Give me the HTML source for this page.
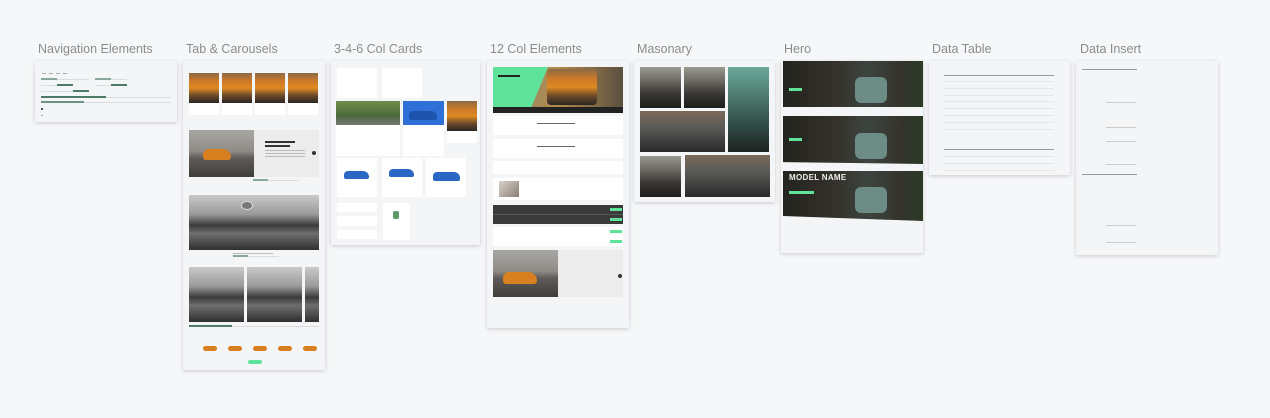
<!DOCTYPE html>
<html><head><meta charset="utf-8"><style>
*{margin:0;padding:0;box-sizing:border-box}
body{width:1270px;height:418px;background:#f6f7f8;position:relative;overflow:hidden;font-family:"Liberation Sans",sans-serif}
.t{position:absolute;top:42px;font-size:12.5px;color:#8c8c8c;white-space:nowrap}
.f{position:absolute;background:#f4f5f7;box-shadow:0 1px 4px rgba(0,0,0,.18)}
.a{position:absolute}
.w{position:absolute;background:#fff}
.orange{background:linear-gradient(180deg,#8a6a44 0,#c8782a 25%,#e08a22 50%,#6a4a2a 75%,#2b2622 100%)}
.grille{background:linear-gradient(180deg,#c9c9c9 0,#9a9a9a 35%,#3b3b3b 55%,#6e6e6e 70%,#2f2f2f 100%)}
.sea{background:linear-gradient(180deg,#a8a6a2 0,#8f8c88 45%,#5e5b58 60%,#3f3d3b 100%)}
.dark{background:linear-gradient(180deg,#9a9a90 0,#6a6660 35%,#3a3835 65%,#1d1d1c 100%)}
.hero{background:linear-gradient(90deg,#23231f 0,#35332c 40%,#3d4440 60%,#34332c 85%,#2a3a25 100%)}
.g{background:#5fe39a}
.l{position:absolute;height:1px;background:#d9dcdf}
.ln{position:absolute;height:1px;background:#e4e6e8}
.tx{position:absolute;height:1px;background:#555}
</style></head><body>

<div class="t" style="left:38px">Navigation Elements</div>
<div class="t" style="left:186px">Tab &amp; Carousels</div>
<div class="t" style="left:334px">3-4-6 Col Cards</div>
<div class="t" style="left:490px">12 Col Elements</div>
<div class="t" style="left:637px">Masonary</div>
<div class="t" style="left:784px">Hero</div>
<div class="t" style="left:932px">Data Table</div>
<div class="t" style="left:1080px">Data Insert</div>

<!-- Nav -->
<div class="f" style="left:35px;top:61px;width:142px;height:61px">
  <div class="tx" style="left:7px;top:12px;width:4px;background:#aaa"></div><div class="tx" style="left:14px;top:12px;width:4px;background:#aaa"></div><div class="tx" style="left:21px;top:12px;width:4px;background:#aaa"></div><div class="tx" style="left:28px;top:12px;width:4px;background:#aaa"></div>
  <div class="l" style="left:6px;top:18px;width:48px"></div><div class="a" style="left:6px;top:17px;width:16px;height:2px;background:#8aa89a"></div>
  <div class="l" style="left:60px;top:18px;width:32px"></div><div class="a" style="left:60px;top:17px;width:16px;height:2px;background:#8aa89a"></div>
  <div class="l" style="left:6px;top:24px;width:32px"></div><div class="a" style="left:22px;top:23px;width:16px;height:2px;background:#4f7a66"></div>
  <div class="l" style="left:60px;top:24px;width:32px"></div><div class="a" style="left:76px;top:23px;width:16px;height:2px;background:#4f7a66"></div>
  <div class="l" style="left:6px;top:30px;width:48px"></div><div class="a" style="left:38px;top:29px;width:16px;height:2px;background:#4f7a66"></div>
  <div class="l" style="left:6px;top:36px;width:130px"></div><div class="a" style="left:6px;top:35px;width:65px;height:2px;background:#4f7a66"></div>
  <div class="l" style="left:6px;top:41px;width:130px"></div><div class="a" style="left:6px;top:40px;width:43px;height:2px;background:#6f9384"></div>
  <div class="a" style="left:6px;top:47px;width:2px;height:2px;background:#555"></div>
  <div class="a" style="left:6px;top:54px;width:2px;height:1px;background:#999"></div>
</div>

<!-- Tab & Carousels -->
<div class="f" style="left:183px;top:61px;width:142px;height:309px">
  <div class="a orange" style="left:6px;top:12px;width:30px;height:30px"></div>
  <div class="a orange" style="left:39px;top:12px;width:30px;height:30px"></div>
  <div class="a orange" style="left:72px;top:12px;width:30px;height:30px"></div>
  <div class="a orange" style="left:105px;top:12px;width:30px;height:30px"></div>
  <div class="w" style="left:6px;top:42px;width:30px;height:12px"></div>
  <div class="w" style="left:39px;top:42px;width:30px;height:12px"></div>
  <div class="w" style="left:72px;top:42px;width:30px;height:12px"></div>
  <div class="w" style="left:105px;top:42px;width:30px;height:12px"></div>
  <div class="a" style="left:6px;top:69px;width:130px;height:47px;background:#ececec"></div>
  <div class="a sea" style="left:6px;top:69px;width:65px;height:47px"></div>
  <div class="a" style="left:20px;top:88px;width:28px;height:11px;background:#d8801f;border-radius:6px 8px 3px 3px"></div>
  <div class="tx" style="left:82px;top:80px;width:30px;background:#333;height:2px"></div>
  <div class="tx" style="left:82px;top:84px;width:25px;background:#333;height:2px"></div>
  <div class="ln" style="left:82px;top:89px;width:40px;background:#bbb"></div>
  <div class="ln" style="left:82px;top:92px;width:40px;background:#bbb"></div>
  <div class="ln" style="left:82px;top:95px;width:40px;background:#bbb"></div>
  <div class="a" style="left:129px;top:90px;width:4px;height:4px;border-radius:50%;background:#333"></div>
  <div class="l" style="left:70px;top:119px;width:46px"></div><div class="a" style="left:70px;top:118px;width:15px;height:2px;background:#8aa89a"></div>
  <div class="a grille" style="left:6px;top:134px;width:130px;height:55px"></div>
  <div class="a" style="left:58px;top:140px;width:12px;height:9px;border-radius:50%;background:#777;border:1px solid #ddd"></div>
  <div class="ln" style="left:50px;top:192px;width:40px;background:#bbb"></div>
  <div class="l" style="left:50px;top:195px;width:46px"></div><div class="a" style="left:50px;top:194px;width:15px;height:2px;background:#8aa89a"></div>
  <div class="a grille" style="left:6px;top:206px;width:55px;height:55px"></div>
  <div class="a grille" style="left:64px;top:206px;width:55px;height:55px"></div>
  <div class="a grille" style="left:122px;top:206px;width:14px;height:55px"></div>
  <div class="l" style="left:6px;top:265px;width:130px"></div><div class="a" style="left:6px;top:264px;width:43px;height:2px;background:#4f7a66"></div>
  <div class="a" style="left:20px;top:285px;width:14px;height:5px;background:#d8801f;border-radius:3px"></div>
  <div class="a" style="left:45px;top:285px;width:14px;height:5px;background:#d8801f;border-radius:3px"></div>
  <div class="a" style="left:70px;top:285px;width:14px;height:5px;background:#d8801f;border-radius:3px"></div>
  <div class="a" style="left:95px;top:285px;width:14px;height:5px;background:#d8801f;border-radius:3px"></div>
  <div class="a" style="left:120px;top:285px;width:14px;height:5px;background:#d8801f;border-radius:3px"></div>
  <div class="a g" style="left:65px;top:299px;width:14px;height:4px;border-radius:2px"></div>
</div>

<!-- Cards -->
<div class="f" style="left:331px;top:61px;width:149px;height:184px">
  <div class="w" style="left:6px;top:7px;width:40px;height:30px"></div>
  <div class="w" style="left:51px;top:7px;width:40px;height:30px"></div>
  <div class="w" style="left:5px;top:40px;width:64px;height:55px"></div>
  <div class="a" style="left:5px;top:40px;width:64px;height:24px;background:linear-gradient(180deg,#6f8d4c,#4b6a3a 60%,#777 100%)"></div>
  <div class="w" style="left:72px;top:40px;width:41px;height:55px"></div>
  <div class="a" style="left:72px;top:40px;width:41px;height:24px;background:#2f6fd8"></div>
  <div class="a" style="left:78px;top:50px;width:28px;height:9px;background:#1e54ad;border-radius:4px 6px 2px 2px"></div>
  <div class="w" style="left:116px;top:40px;width:30px;height:42px"></div>
  <div class="a orange" style="left:116px;top:40px;width:30px;height:30px"></div>
  <div class="w" style="left:6px;top:97px;width:40px;height:39px"></div>
  <div class="w" style="left:51px;top:97px;width:40px;height:39px"></div>
  <div class="w" style="left:95px;top:97px;width:40px;height:39px"></div>
  <div class="a" style="left:13px;top:110px;width:25px;height:8px;background:#2a66c4;border-radius:4px 6px 2px 2px"></div>
  <div class="a" style="left:58px;top:108px;width:25px;height:8px;background:#2a66c4;border-radius:4px 6px 2px 2px"></div>
  <div class="a" style="left:102px;top:111px;width:27px;height:9px;background:#2a66c4;border-radius:4px 6px 2px 2px"></div>
  <div class="w" style="left:6px;top:142px;width:40px;height:9px"></div>
  <div class="w" style="left:6px;top:155px;width:40px;height:10px"></div>
  <div class="w" style="left:6px;top:169px;width:40px;height:9px"></div>
  <div class="w" style="left:52px;top:142px;width:27px;height:37px"></div>
  <div class="a" style="left:62px;top:150px;width:6px;height:8px;background:#5a9a6a;border-radius:2px"></div>
</div>

<!-- 12 Col -->
<div class="f" style="left:487px;top:61px;width:142px;height:267px">
  <div class="a" style="left:6px;top:6px;width:130px;height:46px;background:linear-gradient(90deg,#8a8a80,#b38a4a 50%,#5a5040)"></div>
  <div class="a orange" style="left:60px;top:8px;width:50px;height:36px;border-radius:4px"></div>
  <div class="a g" style="left:6px;top:6px;width:55px;height:40px;clip-path:polygon(0 0,100% 0,70% 100%,0 100%)"></div>
  <div class="a" style="left:6px;top:46px;width:130px;height:6px;background:#222"></div>
  <div class="tx" style="left:11px;top:14px;width:22px;height:2px;background:#222"></div>
  <div class="w" style="left:6px;top:55px;width:130px;height:19px"></div>
  <div class="w" style="left:6px;top:78px;width:130px;height:19px"></div>
  <div class="w" style="left:6px;top:100px;width:130px;height:13px"></div>
  <div class="w" style="left:6px;top:117px;width:130px;height:22px"></div>
  <div class="a" style="left:12px;top:120px;width:20px;height:16px;background:linear-gradient(135deg,#d9d3cc,#8a7f77)"></div>
  <div class="tx" style="left:50px;top:62px;width:38px;background:#666"></div>
  <div class="tx" style="left:50px;top:85px;width:38px;background:#666"></div>
  <div class="a" style="left:6px;top:144px;width:130px;height:19px;background:#3a3a3a"></div>
  <div class="l" style="left:6px;top:153px;width:130px;background:#555"></div>
  <div class="a g" style="left:123px;top:147px;width:12px;height:3px"></div>
  <div class="a g" style="left:123px;top:157px;width:12px;height:3px"></div>
  <div class="w" style="left:6px;top:166px;width:130px;height:19px"></div>
  <div class="a g" style="left:123px;top:169px;width:12px;height:3px"></div>
  <div class="a g" style="left:123px;top:179px;width:12px;height:3px"></div>
  <div class="a" style="left:6px;top:189px;width:130px;height:47px;background:#ececec"></div>
  <div class="a sea" style="left:6px;top:189px;width:65px;height:47px"></div>
  <div class="a" style="left:16px;top:211px;width:34px;height:12px;background:#d8801f;border-radius:6px 9px 3px 3px"></div>
  <div class="a" style="left:131px;top:213px;width:4px;height:4px;border-radius:50%;background:#333"></div>
</div>

<!-- Masonry -->
<div class="f" style="left:634px;top:61px;width:141px;height:141px">
  <div class="a dark" style="left:6px;top:6px;width:41px;height:41px"></div>
  <div class="a dark" style="left:50px;top:6px;width:41px;height:41px"></div>
  <div class="a" style="left:94px;top:6px;width:41px;height:85px;background:linear-gradient(180deg,#6aa89a,#2f4a44 70%,#1f2220)"></div>
  <div class="a dark" style="left:6px;top:50px;width:85px;height:41px;background:linear-gradient(180deg,#7b6a5a,#5a5a58 40%,#2a2a2a)"></div>
  <div class="a dark" style="left:6px;top:95px;width:41px;height:41px"></div>
  <div class="a dark" style="left:51px;top:94px;width:85px;height:42px;background:linear-gradient(180deg,#7b6a5a,#5a5a58 40%,#2a2a2a)"></div>
</div>

<!-- Hero -->
<div class="f" style="left:781px;top:61px;width:142px;height:192px">
  <div class="a hero" style="left:2px;top:0;width:140px;height:46px"></div>
  <div class="a" style="left:74px;top:16px;width:32px;height:26px;background:#6d8c86;border-radius:6px"></div>
  <div class="a g" style="left:8px;top:27px;width:13px;height:3px"></div>
  <div class="a hero" style="left:2px;top:55px;width:140px;height:48px;clip-path:polygon(0 0,100% 0,100% 100%,0 96%)"></div>
  <div class="a" style="left:74px;top:72px;width:32px;height:26px;background:#6d8c86;border-radius:6px"></div>
  <div class="a g" style="left:8px;top:77px;width:13px;height:3px"></div>
  <div class="a hero" style="left:2px;top:110px;width:140px;height:50px;clip-path:polygon(0 0,100% 0,100% 100%,0 90%)"></div>
  <div class="a" style="left:74px;top:126px;width:32px;height:26px;background:#6d8c86;border-radius:6px"></div>
  <div style="position:absolute;left:8px;top:112px;font-size:8px;font-weight:bold;color:#eee;letter-spacing:.3px">MODEL NAME</div>
  <div class="a g" style="left:8px;top:130px;width:25px;height:3px"></div>
</div>

<!-- Data Table -->
<div class="f" style="left:929px;top:61px;width:141px;height:114px">
  <div class="l" style="left:15px;top:14px;width:110px;background:#999"></div>
  <div class="ln" style="left:15px;top:20px;width:110px"></div>
  <div class="ln" style="left:15px;top:27px;width:110px"></div>
  <div class="ln" style="left:15px;top:34px;width:110px"></div>
  <div class="ln" style="left:15px;top:40px;width:110px"></div>
  <div class="ln" style="left:15px;top:47px;width:110px"></div>
  <div class="ln" style="left:15px;top:54px;width:110px"></div>
  <div class="ln" style="left:15px;top:61px;width:110px"></div>
  <div class="ln" style="left:15px;top:68px;width:110px"></div>
  <div class="l" style="left:15px;top:88px;width:110px;background:#999"></div>
  <div class="ln" style="left:15px;top:95px;width:110px"></div>
  <div class="ln" style="left:15px;top:102px;width:110px"></div>
  <div class="ln" style="left:15px;top:109px;width:110px"></div>
</div>

<!-- Data Insert -->
<div class="f" style="left:1076px;top:61px;width:142px;height:194px">
  <div class="tx" style="left:6px;top:8px;width:55px;background:#999"></div>
  <div class="ln" style="left:30px;top:41px;width:30px;background:#ccc"></div>
  <div class="ln" style="left:30px;top:66px;width:30px;background:#ccc"></div>
  <div class="ln" style="left:30px;top:80px;width:30px;background:#ccc"></div>
  <div class="ln" style="left:30px;top:103px;width:30px;background:#ccc"></div>
  <div class="tx" style="left:6px;top:113px;width:55px;background:#999"></div>
  <div class="ln" style="left:30px;top:164px;width:30px;background:#ccc"></div>
  <div class="ln" style="left:30px;top:181px;width:30px;background:#ccc"></div>
</div>
</body></html>
